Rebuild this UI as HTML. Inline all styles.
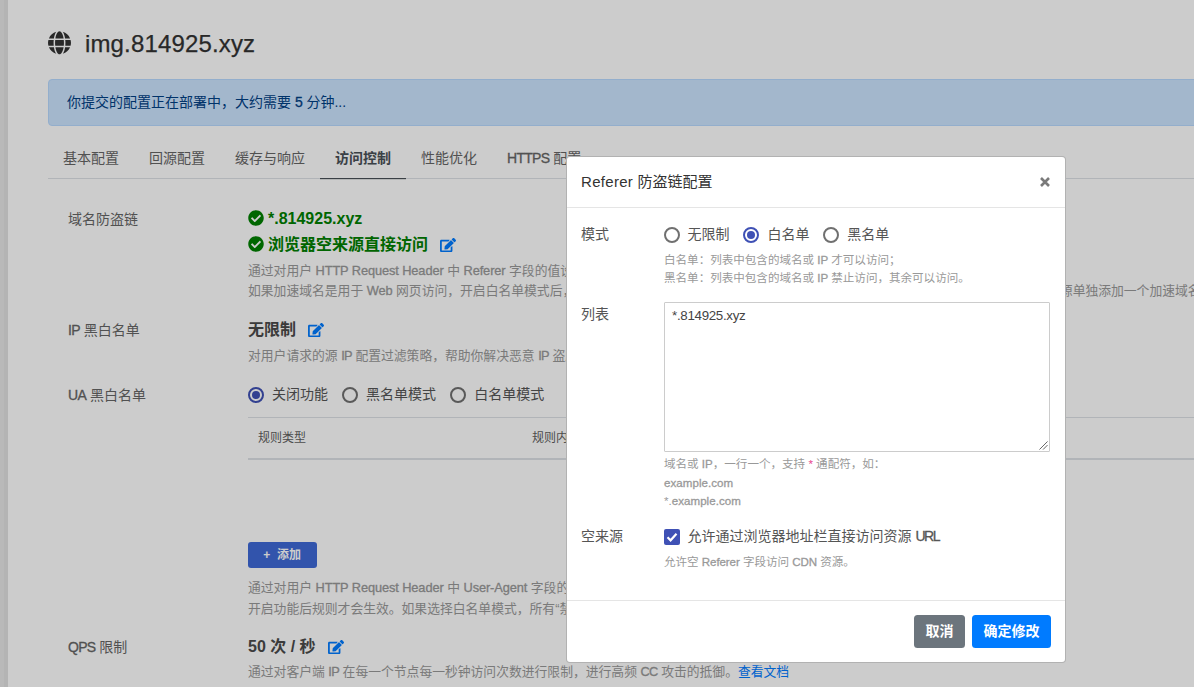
<!DOCTYPE html>
<html lang="zh-CN">
<head>
<meta charset="utf-8">
<title>img.814925.xyz</title>
<style>
*{box-sizing:border-box;}
html,body{margin:0;padding:0;}
body{width:1194px;height:687px;overflow:hidden;position:relative;background:#fff;
  font-family:"Liberation Sans","Noto Sans CJK SC",sans-serif;font-size:14px;line-height:21px;color:#666;}
svg{display:block;}
.l{-webkit-text-stroke:.3px currentColor;letter-spacing:-.1px;}
.l.w{letter-spacing:.05px;}
.l.c{letter-spacing:-.7px;}
.side{position:absolute;left:0;top:0;width:8px;height:687px;background:linear-gradient(90deg,#e8e8e8 0,#e8e8e8 4px,#e1e1e1 4px);}
.main{position:absolute;left:48px;top:0;width:1400px;height:687px;}
.title{position:absolute;left:0;top:26px;height:36px;line-height:36px;font-size:24px;color:#333;white-space:nowrap;letter-spacing:.15px;}
.title svg{position:absolute;left:0;top:5px;width:23px;height:23.7px;fill:#333;}
.title span{position:absolute;left:37px;top:0;-webkit-text-stroke:.25px currentColor;}
.alert{position:absolute;left:0;top:79px;width:1400px;height:47px;border:1px solid #b8daff;background:#cce5ff;color:#004085;border-radius:4px;padding:11.5px 18px;line-height:21px;white-space:nowrap;}
.tabs{position:absolute;left:0;top:142px;width:1400px;height:37px;border-bottom:1px solid #dee2e6;white-space:nowrap;}
.tabs a{display:inline-block;height:38px;padding:6px 15px 0;line-height:21px;color:#666;text-decoration:none;position:relative;}
.tabs a.on{color:#495057;font-weight:bold;}
.tabs a.on:after{content:"";position:absolute;left:0;right:0;top:36px;height:1px;background:#495057;box-shadow:0 .5px 0 rgba(73,80,87,.35);}
.lbl{position:absolute;left:20px;line-height:21px;height:21px;color:#666;white-space:nowrap;}
.val{position:absolute;left:200px;white-space:nowrap;font-size:16px;font-weight:bold;color:#4a4a4a;height:26px;line-height:26px;}
.val.g{color:#008000;}
.val svg{display:inline-block;vertical-align:-2px;fill:currentColor;}
.val .ck{width:16px;height:16px;margin-right:4px;vertical-align:-1.5px;}
.val .ed{width:16px;height:14.2px;fill:#007bff;margin-left:12px;vertical-align:-2px;}
.desc{position:absolute;left:200px;font-size:12.8px;line-height:20px;color:#999;white-space:nowrap;}
.desc a{color:#007bff;text-decoration:none;}
.rad{position:absolute;left:200px;top:384px;height:21px;white-space:nowrap;color:#555;}
.mrow label{margin-right:13.8px !important;}
.rad label,.mrow label{display:inline-block;margin-right:14.1px;position:relative;padding-left:24px;line-height:21px;}
.rad i,.mrow i{position:absolute;left:0;top:2.5px;width:16px;height:16px;border-radius:50%;border:2px solid #707070;background:transparent;}
.rad i.on,.mrow i.on{border-color:#3f51b5;}
.rad i.on:after,.mrow i.on:after{content:"";position:absolute;left:2px;top:2px;width:8px;height:8px;border-radius:50%;background:#3f51b5;}
.tbl{position:absolute;left:200px;top:417px;width:1100px;height:43px;border-top:1px solid #dee2e6;border-bottom:2px solid #dee2e6;font-size:12px;color:#606060;}
.tbl span{position:absolute;top:10.5px;line-height:18px;}
.add{position:absolute;left:199.7px;top:542px;width:69px;height:26px;background:#3f6ad8;border-radius:3px;color:#fff;font-size:12px;font-weight:bold;line-height:26px;text-align:center;white-space:nowrap;}
.mask{position:absolute;left:0;top:0;width:1194px;height:687px;background:rgba(0,0,0,.2);}
.modal{position:absolute;left:566px;top:156px;width:500px;height:507px;background:#fff;border:1px solid rgba(0,0,0,.3);border-radius:4px;color:#555;}
.mh{position:absolute;left:0;top:0;width:498px;height:51px;border-bottom:1px solid #e5e5e5;}
.mh h5{margin:0;position:absolute;left:14px;top:14px;font-size:15px;line-height:22px;font-weight:normal;color:#333;white-space:nowrap;}
.mh .x{position:absolute;left:472.5px;top:20px;width:10px;height:10px;}
.mh .x svg{width:10px;height:10px;stroke:#7a7a7a;stroke-width:2.6;}
.ml{position:absolute;left:14px;line-height:21px;color:#555;white-space:nowrap;}
.mrow{position:absolute;left:96.6px;white-space:nowrap;line-height:21px;color:#555;}
.hint{position:absolute;left:97px;font-size:11.55px;line-height:18px;color:#999;white-space:nowrap;}
.hint .c{letter-spacing:0 !important;}
.hint b{font-weight:normal;color:#e83e8c;}
.ta{position:absolute;left:97px;top:145px;width:386px;height:150px;border:1px solid #ccc;border-radius:1px;font-size:13.33px;line-height:16px;padding:5px 7px;color:#444;letter-spacing:-.3px;}
.ta svg{position:absolute;right:1px;bottom:1px;width:9px;height:9px;stroke:#555;stroke-width:1;}
.cb{position:absolute;left:0;top:2.5px;width:16px;height:16px;border-radius:2px;background:#3f51b5;}
.cb svg{width:16px;height:16px;fill:none;stroke:#fff;stroke-width:2.2;}
.mf{position:absolute;left:0;top:443px;width:498px;height:62px;border-top:1px solid #e5e5e5;}
.btn{position:absolute;top:14px;height:33px;border-radius:3.5px;color:#fff;font-weight:bold;line-height:33px;text-align:center;white-space:nowrap;}
.btn.c{left:347px;width:51px;background:#6c757d;}
.btn.p{left:405px;width:79px;background:#007bff;}
</style>
</head>
<body>
<div class="side"></div>
<div class="main">
  <div class="title">
    <svg viewBox="0 0 496 512"><path d="M336.5 160C322 70.7 287.8 8 248 8s-74 62.7-88.500 152h177zM152 256c0 22.200 1.200 43.500 3.300 64h185.300c2.100-20.500 3.300-41.800 3.300-64s-1.200-43.500-3.300-64H155.300c-2.100 20.500-3.300 41.800-3.300 64zm324.700-96c-28.600-67.900-86.500-120.400-158-141.600 24.400 33.800 41.200 84.700 50 141.600h108zM177.200 18.400C105.800 39.600 47.800 92.100 19.300 160h108c8.700-56.900 25.500-107.800 49.900-141.600zM487.400 192H372.700c2.100 21 3.300 42.500 3.300 64s-1.200 43-3.300 64h114.600c5.500-20.500 8.600-41.800 8.600-64s-3.100-43.500-8.500-64zM120 256c0-21.500 1.200-43 3.300-64H8.600C3.200 212.500 0 233.800 0 256s3.200 43.500 8.600 64h114.600c-2-21-3.200-42.500-3.200-64zm39.500 96c14.500 89.300 48.700 152 88.500 152s74-62.700 88.500-152h-177zm159.300 141.600c71.400-21.200 129.400-73.700 158-141.600h-108c-8.800 56.900-25.600 107.800-50 141.600zM19.300 352c28.600 67.900 86.500 120.400 158 141.600-24.400-33.800-41.200-84.700-50-141.600h-108z"/></svg>
    <span>img.814925.xyz</span>
  </div>
  <div class="alert">你提交的配置正在部署中，大约需要 <span class="l">5</span> 分钟...</div>
  <div class="tabs"><a>基本配置</a><a>回源配置</a><a>缓存与响应</a><a class="on">访问控制</a><a>性能优化</a><a><span class="l c">HTTPS</span> 配置</a></div>

  <div class="lbl" style="top:209px">域名防盗链</div>
  <div class="val g" style="top:206px"><svg class="ck" viewBox="0 0 512 512"><path d="M504 256c0 136.967-111.033 248-248 248S8 392.967 8 256 119.033 8 256 8s248 111.033 248 248zM227.314 387.314l184-184c6.248-6.248 6.248-16.379 0-22.627l-22.627-22.627c-6.248-6.249-16.379-6.249-22.628 0L216 308.118l-70.059-70.059c-6.248-6.248-16.379-6.248-22.628 0l-22.627 22.627c-6.248 6.248-6.248 16.379 0 22.627l104 104c6.249 6.249 16.379 6.249 22.628.001z"/></svg>*.814925.xyz</div>
  <div class="val g" style="top:232px"><svg class="ck" viewBox="0 0 512 512"><path d="M504 256c0 136.967-111.033 248-248 248S8 392.967 8 256 119.033 8 256 8s248 111.033 248 248zM227.314 387.314l184-184c6.248-6.248 6.248-16.379 0-22.627l-22.627-22.627c-6.248-6.249-16.379-6.249-22.628 0L216 308.118l-70.059-70.059c-6.248-6.248-16.379-6.248-22.628 0l-22.627 22.627c-6.248 6.248-6.248 16.379 0 22.627l104 104c6.249 6.249 16.379 6.249 22.628.001z"/></svg>浏览器空来源直接访问<svg class="ed" viewBox="0 0 576 512"><path d="M402.6 83.200l90.200 90.200c3.800 3.800 3.800 10 0 13.800L274.400 405.600l-92.800 10.300c-12.400 1.400-22.900-9.100-21.500-21.500l10.300-92.800L388.800 83.200c3.800-3.800 10-3.800 13.800 0zm162-22.900l-48.800-48.800c-15.200-15.200-39.900-15.200-55.200 0l-35.400 35.400c-3.800 3.800-3.800 10 0 13.800l90.200 90.200c3.800 3.800 10 3.800 13.800 0l35.400-35.400c15.200-15.300 15.200-40 0-55.200zM384 346.200V448H64V128h229.800c3.200 0 6.200-1.300 8.500-3.500l40-40c7.600-7.600 2.200-20.500-8.500-20.500H48C21.500 64 0 85.500 0 112v352c0 26.500 21.500 48 48 48h352c26.500 0 48-21.500 48-48V306.200c0-10.700-12.900-16-20.500-8.500l-40 40c-2.200 2.300-3.500 5.300-3.500 8.500z"/></svg></div>
  <div class="desc" style="top:261px">通过对用户 <span class="l">HTTP Request Header</span> 中 <span class="l">Referer</span> 字段的值设置访问控制策略，实现对访客的身份识别和过滤，防止网站资源被非法盗用。</div>
  <div class="desc" style="top:281px">如果加速域名是用于 <span class="l">Web</span> 网页访问，开启白名单模式后，<span id="hid" style="display:inline-block;width:484.6px;overflow:hidden;vertical-align:top;height:20px">需要同时允许浏览器空来源直接访问，否则页面将无法打开，建议为静态资</span>源单独添加一个加速域名。</div>

  <div class="lbl" style="top:320px"><span class="l c">IP</span> 黑白名单</div>
  <div class="val" style="top:317px">无限制<svg class="ed" viewBox="0 0 576 512"><path d="M402.6 83.200l90.200 90.200c3.800 3.800 3.800 10 0 13.800L274.400 405.600l-92.800 10.300c-12.400 1.400-22.900-9.100-21.500-21.500l10.300-92.800L388.800 83.200c3.800-3.800 10-3.800 13.800 0zm162-22.900l-48.800-48.800c-15.200-15.200-39.900-15.200-55.200 0l-35.400 35.400c-3.800 3.800-3.800 10 0 13.800l90.200 90.200c3.800 3.800 10 3.800 13.800 0l35.400-35.400c15.200-15.300 15.200-40 0-55.200zM384 346.200V448H64V128h229.800c3.200 0 6.200-1.300 8.500-3.500l40-40c7.600-7.600 2.200-20.500-8.500-20.500H48C21.500 64 0 85.500 0 112v352c0 26.500 21.500 48 48 48h352c26.500 0 48-21.500 48-48V306.200c0-10.700-12.900-16-20.500-8.500l-40 40c-2.200 2.300-3.500 5.300-3.500 8.500z"/></svg></div>
  <div class="desc" style="top:346px">对用户请求的源 <span class="l c">IP</span> 配置过滤策略，帮助你解决恶意 <span class="l c">IP</span> 盗刷、攻击等问题。</div>

  <div class="lbl" style="top:385px"><span class="l c">UA</span> 黑白名单</div>
  <div class="rad"><label><i class="on"></i>关闭功能</label><label><i></i>黑名单模式</label><label><i></i>白名单模式</label></div>
  <div class="tbl"><span style="left:10px">规则类型</span><span style="left:284px">规则内容</span></div>
  <div class="add">+&nbsp; 添加</div>
  <div class="desc" style="top:578px">通过对用户 <span class="l">HTTP Request Header</span> 中 <span class="l">User-Agent</span> 字段的值设置访问控制规则，实现对访客的身份识别和过滤。</div>
  <div class="desc" style="top:599px">开启功能后规则才会生效。如果选择白名单模式，所有“禁止”规则将被忽略。</div>

  <div class="lbl" style="top:637px"><span class="l c">QPS</span> 限制</div>
  <div class="val" style="top:634px">50 次 / 秒<svg class="ed" viewBox="0 0 576 512"><path d="M402.6 83.200l90.200 90.200c3.800 3.800 3.800 10 0 13.800L274.400 405.600l-92.800 10.300c-12.400 1.400-22.900-9.100-21.500-21.500l10.300-92.800L388.800 83.200c3.800-3.800 10-3.800 13.800 0zm162-22.900l-48.800-48.800c-15.200-15.200-39.900-15.200-55.200 0l-35.400 35.400c-3.800 3.800-3.800 10 0 13.800l90.200 90.200c3.800 3.800 10 3.800 13.800 0l35.400-35.400c15.200-15.300 15.200-40 0-55.200zM384 346.200V448H64V128h229.800c3.200 0 6.200-1.300 8.500-3.500l40-40c7.600-7.600 2.200-20.500-8.500-20.500H48C21.500 64 0 85.500 0 112v352c0 26.500 21.500 48 48 48h352c26.500 0 48-21.500 48-48V306.200c0-10.700-12.900-16-20.500-8.500l-40 40c-2.200 2.300-3.500 5.300-3.500 8.500z"/></svg></div>
  <div class="desc" style="top:662px">通过对客户端 <span class="l c">IP</span> 在每一个节点每一秒钟访问次数进行限制，进行高频 <span class="l c">CC</span> 攻击的抵御。<a>查看文档</a></div>
</div>
<div class="mask"></div>

<div class="modal">
  <div class="mh"><h5><span style="letter-spacing:.3px">Referer </span>防盗链配置</h5><div class="x"><svg viewBox="0 0 10 10"><path d="M1 1L9 9M9 1L1 9" fill="none"/></svg></div></div>
  <div class="ml" style="top:67px">模式</div>
  <div class="mrow" style="top:67px"><label><i></i>无限制</label><label><i class="on"></i>白名单</label><label><i></i>黑名单</label></div>
  <div class="hint" style="top:94px">白名单：列表中包含的域名或 <span class="l c">IP</span> 才可以访问；</div>
  <div class="hint" style="top:112px">黑名单：列表中包含的域名或 <span class="l c">IP</span> 禁止访问，其余可以访问。</div>
  <div class="ml" style="top:147px">列表</div>
  <div class="ta">*.814925.xyz<svg viewBox="0 0 10 10"><path d="M0.500 9.500L9.500 0.500M4.500 9.500L9.500 4.500" fill="none"/></svg></div>
  <div class="hint" style="top:298px">域名或 <span class="l c">IP</span>，一行一个，支持 <b>*</b> 通配符，如：</div>
  <div class="hint" style="top:317px"><span class="l w">example.com</span></div>
  <div class="hint" style="top:335px">*.<span class="l w">example.com</span></div>
  <div class="ml" style="top:369px">空来源</div>
  <div class="mrow" style="top:369px"><label><span class="cb"><svg viewBox="0 0 16 16"><path d="M3.500 8.300L6.600 11.300L12.500 4.800"/></svg></span>允许通过浏览器地址栏直接访问资源 <span class="l c" style="letter-spacing:-1.5px">URL</span></label></div>
  <div class="hint" style="top:396px">允许空 <span class="l">Referer</span> 字段访问 <span class="l">CDN</span> 资源。</div>
  <div class="mf"><div class="btn c">取消</div><div class="btn p">确定修改</div></div>
</div>
</body>
</html>
